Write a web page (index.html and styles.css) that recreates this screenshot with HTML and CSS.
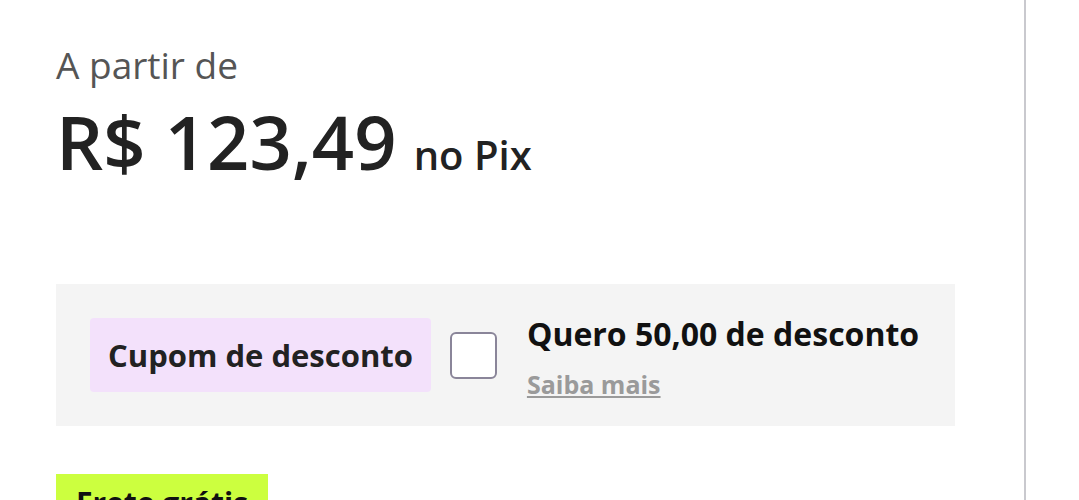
FILE: index.html
```html
<!DOCTYPE html>
<html lang="pt-BR">
<head>
  <meta charset="UTF-8">
  <meta name="viewport" content="width=device-width, initial-scale=1.0">
  <title>Oferta</title>
  <link rel="stylesheet" href="styles.css">
</head>
<body>
  <div class="page">
    <div class="product-info">
      <p class="price-label">A partir de</p>
      <p class="price">R$ 123,49 <span class="price-method">no Pix</span></p>

      <div class="coupon-box">
        <span class="coupon-tag">Cupom de desconto</span>
        <label class="coupon-check">
          <input type="checkbox" class="checkbox">
          <span class="coupon-text">
            <span class="coupon-title">Quero 50,00 de desconto</span>
            <a href="#" class="coupon-link">Saiba mais</a>
          </span>
        </label>
      </div>

      <span class="shipping-tag">Frete grátis</span>
    </div>
    <div class="side"></div>
  </div>
</body>
</html>
```

FILE: styles.css
```css
body {
  margin: 0;
  font-family: "Open Sans", "Noto Sans", sans-serif;
  background-color: #fff;
  color: #222;
}
.page {
  display: flex;
  height: 500px;
  overflow: hidden;
}
.product-info {
  width: 1026px;
  flex-shrink: 0;
  padding: 40px 0 0 56px;
  box-sizing: border-box;
  border-right: 2px solid #c9c9ce;
}
.price-label {
  margin: 0;
  font-size: 37px;
  color: #555;
  line-height: 50px;
}
.price {
  margin: 0;
  font-size: 74px;
  font-weight: 600;
  line-height: 104px;
  color: #222;
}
.price-method {
  margin-left: -2px;
  font-size: 40px;
  font-weight: 600;
}
.coupon-box {
  display: flex;
  align-items: center;
  width: 899px;
  height: 142px;
  margin-top: 77px;
  padding: 0 34px;
  box-sizing: border-box;
  background-color: #f4f4f4;
}
.coupon-tag {
  display: flex;
  align-items: center;
  height: 74px;
  padding: 0 18px;
  background-color: #f3e1fb;
  border-radius: 4px;
  font-size: 31px;
  font-weight: 700;
  color: #222;
}
.coupon-check {
  display: flex;
  align-items: center;
  margin-left: 19px;
}
.checkbox {
  appearance: none;
  width: 47px;
  height: 47px;
  margin: 0;
  background-color: #fff;
  border: 2px solid #8a8599;
  border-radius: 6px;
  box-sizing: border-box;
}
.coupon-text {
  display: flex;
  flex-direction: column;
  margin-left: 30px;
  padding-top: 4px;
}
.coupon-title {
  font-size: 32px;
  font-weight: 700;
  line-height: 40px;
  color: #111;
}
.coupon-link {
  margin-top: 14px;
  font-size: 25px;
  font-weight: 700;
  line-height: 32px;
  color: #9a9a9a;
}
.shipping-tag {
  display: inline-block;
  margin-top: 48px;
  padding: 8px 20px;
  background-color: #ccff3f;
  font-size: 30px;
  font-weight: 700;
  color: #111;
}
.side {
  flex: 1;
}
```
